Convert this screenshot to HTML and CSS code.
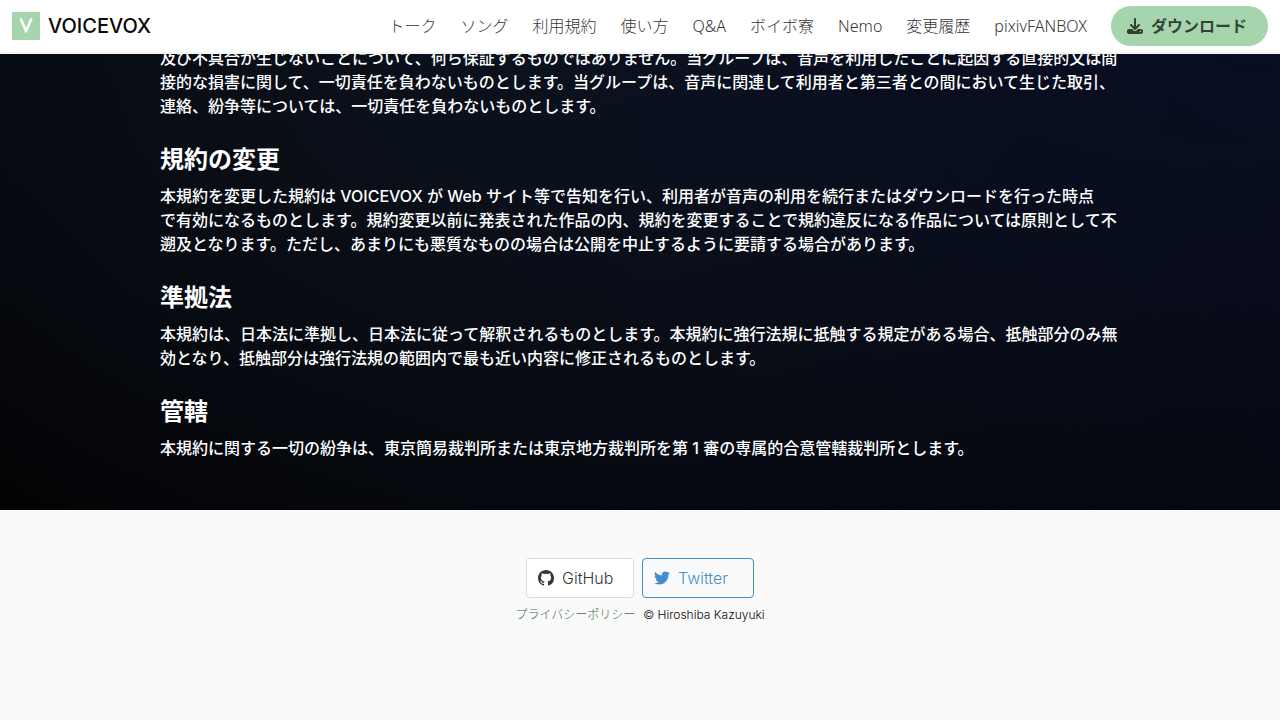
FILE: index.html
```html
<!DOCTYPE html>
<html lang="ja">
<head>
<meta charset="utf-8">
<meta name="viewport" content="width=device-width, initial-scale=1">
<title>利用規約 | VOICEVOX</title>
<link rel="stylesheet" href="styles.css">
</head>
<body>
<header class="navbar">
  <a class="brand" href="#">
    <svg class="brand-logo" viewBox="0 0 28 28" aria-hidden="true"><rect width="28" height="28" fill="#a5d4ad"/><path d="M9 7.300 14 19.300 19.200 7.300" fill="none" stroke="#fff" stroke-width="2.600" stroke-linecap="round" stroke-linejoin="round"/></svg>
    <span>VOICEVOX</span>
  </a>
  <nav class="menu">
    <a href="#">トーク</a>
    <a href="#">ソング</a>
    <a href="#">利用規約</a>
    <a href="#">使い方</a>
    <a href="#">Q&amp;A</a>
    <a href="#">ボイボ寮</a>
    <a href="#">Nemo</a>
    <a href="#">変更履歴</a>
    <a href="#">pixivFANBOX</a>
  </nav>
  <button class="download" type="button">
    <svg class="icon" viewBox="0 0 512 512" aria-hidden="true"><path fill="currentColor" d="M288 32c0-17.700-14.300-32-32-32s-32 14.300-32 32v242.700l-73.400-73.400c-12.500-12.500-32.800-12.500-45.300 0s-12.500 32.800 0 45.300l128 128c12.500 12.500 32.800 12.500 45.300 0l128-128c12.500-12.500 12.500-32.800 0-45.300s-32.800-12.500-45.300 0L288 274.700V32zM64 352c-35.300 0-64 28.700-64 64v32c0 35.300 28.700 64 64 64h384c35.300 0 64-28.700 64-64v-32c0-35.300-28.700-64-64-64H346.500l-45.300 45.300c-25 25-65.500 25-90.500 0L165.500 352H64zm368 56a24 24 0 1 1 0 48 24 24 0 1 1 0-48z"/></svg>
    <span>ダウンロード</span>
  </button>
</header>
<main class="terms">
  <div class="container">
    <p>及び不具合が生じないことについて、何ら保証するものではありません。当グループは、音声を利用したことに起因する直接的又は間接的な損害に関して、一切責任を負わないものとします。当グループは、音声に関連して利用者と第三者との間において生じた取引、連絡、紛争等については、一切責任を負わないものとします。</p>
    <h2>規約の変更</h2>
    <p>本規約を変更した規約は VOICEVOX が Web サイト等で告知を行い、利用者が音声の利用を続行またはダウンロードを行った時点<br>で有効になるものとします。規約変更以前に発表された作品の内、規約を変更することで規約違反になる作品については原則として不遡及となります。ただし、あまりにも悪質なものの場合は公開を中止するように要請する場合があります。</p>
    <h2>準拠法</h2>
    <p>本規約は、日本法に準拠し、日本法に従って解釈されるものとします。本規約に強行法規に抵触する規定がある場合、抵触部分のみ無効となり、抵触部分は強行法規の範囲内で最も近い内容に修正されるものとします。</p>
    <h2>管轄</h2>
    <p>本規約に関する一切の紛争は、東京簡易裁判所または東京地方裁判所を第 1 審の専属的合意管轄裁判所とします。</p>
  </div>
</main>
<footer class="footer">
  <div class="social">
    <a class="social-link" href="#">
      <svg class="icon" viewBox="0 0 16 16" aria-hidden="true"><path fill="#363636" d="M8 0C3.580 0 0 3.580 0 8c0 3.540 2.290 6.530 5.470 7.590.4.070.55-.17.55-.38 0-.19-.01-.82-.01-1.490-2.010.37-2.530-.49-2.690-.94-.09-.23-.48-.94-.82-1.130-.28-.15-.68-.52-.01-.53.63-.01 1.080.58 1.230.82.72 1.210 1.870.87 2.330.66.070-.52.28-.87.51-1.070-1.780-.2-3.640-.89-3.640-3.950 0-.87.31-1.590.82-2.150-.08-.2-.36-1.020.08-2.120 0 0 .67-.21 2.200.82.64-.18 1.320-.27 2-.27s1.360.09 2 .27c1.530-1.040 2.200-.82 2.200-.82.44 1.100.16 1.920.08 2.120.51.56.82 1.270.82 2.150 0 3.070-1.870 3.750-3.650 3.950.29.25.54.73.54 1.480 0 1.070-.01 1.930-.01 2.200 0 .21.15.46.55.38A8.010 8.010 0 0 0 16 8c0-4.420-3.580-8-8-8z"/></svg>
      <span>GitHub</span>
    </a>
    <a class="social-link social-link-blue" href="#">
      <svg class="icon" viewBox="0 0 512 512" aria-hidden="true"><path fill="currentColor" d="M459.370 151.716c.325 4.548.325 9.097.325 13.645 0 138.720-105.583 298.558-298.558 298.558-59.452 0-114.680-17.219-161.137-47.106 8.447.974 16.568 1.299 25.340 1.299 49.055 0 94.213-16.568 130.274-44.832-46.132-.975-84.792-31.188-98.112-72.772 6.498.974 12.995 1.624 19.818 1.624 9.421 0 18.843-1.300 27.614-3.573-48.081-9.747-84.143-51.980-84.143-102.985v-1.299c13.969 7.797 30.214 12.670 47.431 13.319-28.264-18.843-46.781-51.005-46.781-87.391 0-19.492 5.197-37.360 14.294-52.954 51.655 63.675 129.300 105.258 216.365 109.807-1.624-7.797-2.599-15.918-2.599-24.040 0-57.828 46.782-104.934 104.934-104.934 30.213 0 57.502 12.670 76.670 33.137 23.715-4.548 46.456-13.320 66.599-25.340-7.798 24.366-24.366 44.833-46.132 57.827 21.117-2.273 41.584-8.122 60.426-16.243-14.292 20.791-32.161 39.308-52.628 54.253z"/></svg>
      <span>Twitter</span>
    </a>
  </div>
  <p class="legal"><a href="#">プライバシーポリシー</a><span>© Hiroshiba Kazuyuki</span></p>
</footer>
</body>
</html>
```
FILE: styles.css
```css
* { box-sizing: border-box; }
body {
  display: flex;
  flex-direction: column;
  min-height: 100vh;
  margin: 0;
  background: #fafafa;
  color: #363636;
  font: 300 16px/24px Inter, "Noto Sans CJK JP", sans-serif;
}
a { color: inherit; text-decoration: none; }
p { margin: 0; }
.navbar {
  position: sticky;
  top: 0;
  z-index: 1;
  display: flex;
  align-items: center;
  height: 54px;
  padding: 0 12px;
  border-bottom: 2px solid #f5f5f5;
  background: #fff;
}
.brand {
  display: flex;
  align-items: center;
  gap: 8px;
  margin-right: auto;
  color: #0a0a0a;
  font-size: 20px;
  font-weight: 500;
}
.brand-logo { width: 28px; height: 28px; }
.menu {
  display: flex;
  gap: 24px;
  margin-right: 24px;
  font-family: "Noto Sans", "Noto Sans CJK JP", sans-serif;
  white-space: nowrap;
}
.icon { width: 16px; height: 16px; flex: none; }
.download {
  display: flex;
  align-items: center;
  gap: 8px;
  height: 40px;
  padding: 0 21px 0 16px;
  border: 0;
  border-radius: 20px;
  background: #a5d4ad;
  color: rgba(0, 0, 0, 0.7);
  font: inherit;
  font-weight: 700;
  white-space: nowrap;
}
.terms {
  margin-top: -8px;
  padding: 0 24px 50px;
  background:
    radial-gradient(ellipse at 100% 0%, rgba(8, 14, 36, 0.9), rgba(10, 13, 30, 0) 60%),
    radial-gradient(ellipse at 45% 0%, #0c131b, rgba(8, 11, 18, 0) 90%),
    linear-gradient(30deg, #030304, #04060d 30%, #070914 70%, #090c18);
  color: #fff;
  font-weight: 500;
}
.container { max-width: 960px; margin: 0 auto; }
.terms h2 { margin: 28px 0 11px; font-size: 24px; line-height: 27px; font-weight: 700; }
.footer { padding: 48px 24px; }
.social { display: flex; justify-content: center; gap: 8px; }
.social-link {
  display: flex;
  align-items: center;
  gap: 8px;
  min-width: 108px;
  height: 40px;
  padding: 0 16px 0 11px;
  border: 1px solid #dbdbdb;
  border-radius: 4px;
  background: #fff;
}
.social-link-blue { min-width: 112px; border-color: #3e8ed0; background: #fafafa; color: #3e8ed0; }
.legal {
  display: flex;
  justify-content: center;
  gap: 8px;
  margin-top: 8px;
  font-size: 12px;
  line-height: 18px;
}
.legal a { color: #3a6a46; }
.legal span { color: #0a0a0a; }
```
